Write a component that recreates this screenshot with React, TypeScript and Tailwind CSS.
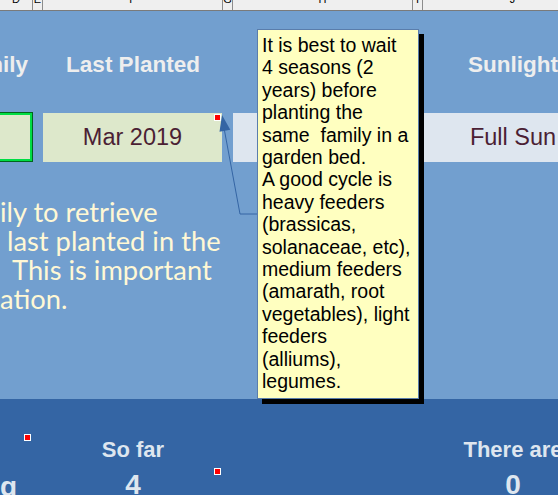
const cols = "grid grid-cols-[33px_10px_180px_10px_180px_10px_180px]";

function ColumnHeaders() {
  const letters = ["D", "E", "F", "G", "H", "I", "J"];
  return (
    <div className={`${cols} h-[11px] shrink-0 bg-[#efefef] border-b border-[#7a7a7a]`}>
      {letters.map((l) => (
        <div key={l} className="flex justify-center overflow-hidden border-r border-[#8c8c8c]">
          <span className="-mt-[6px] text-[11px] leading-none text-black">{l}</span>
        </div>
      ))}
    </div>
  );
}

function Marker({ className }: { className: string }) {
  return <div className={`absolute h-[7px] w-[7px] border border-white bg-[#ff0000] ${className}`} />;
}

export default function App() {
  return (
    <div className="relative h-[495px] w-[558px] overflow-hidden bg-[#729fcf] font-['Liberation_Sans',Arial,sans-serif]">
      <div className="flex h-full flex-col">
        <ColumnHeaders />

        {/* main block */}
        <div className="h-[388px] shrink-0 pt-[43px]">
          <div className={`${cols} h-[22px] text-[22.5px] font-bold leading-none text-[#eeeeee] whitespace-nowrap`}>
            <div className="flex justify-end overflow-hidden pr-[5px]">Family</div>
            <div />
            <div className="text-center">Last Planted</div>
            <div />
            <div />
            <div />
            <div className="text-center">Sunlight</div>
          </div>

          <div className={`${cols} mt-[36px] h-[50px] text-[23.5px] text-[#4b1f34]`}>
            <div className="-ml-[6px] h-[50px] border border-[#00661c]">
              <div className="h-full border-2 border-[#00dd44] bg-[#dde8cb]" />
            </div>
            <div />
            <div className="mt-[1px] mr-[1px] flex h-[49px] items-center justify-center bg-[#dde8cb]">Mar 2019</div>
            <div />
            <div className="mt-[1px] h-[49px] bg-[#dee6ef]" />
            <div className="mt-[1px] h-[49px] bg-[#dee6ef]" />
            <div className="mt-[1px] flex h-[49px] items-center justify-center bg-[#dee6ef]">Full Sun</div>
          </div>

          <div className="mt-[35px] font-['Lato',sans-serif] text-[27.3px] leading-[29px] text-[#fff8d5] whitespace-nowrap">
            <div>ily to retrieve</div>
            <div className="pl-[7px]">last planted in the</div>
            <div className="pl-[12px]">This is important</div>
            <div>ation.</div>
          </div>
        </div>

        {/* totals block */}
        <div className="flex-1 overflow-hidden bg-[#3465a4] pt-[40px] font-bold text-[#dee6ef] whitespace-nowrap">
          <div className={`${cols} h-[22px] text-[22px] leading-none`}>
            <div />
            <div />
            <div className="text-center">So far</div>
            <div />
            <div />
            <div />
            <div className="text-center">There are</div>
          </div>
          <div className={`${cols} mt-[10px] text-[28px] leading-none`}>
            <div className="pt-[2px]">g</div>
            <div />
            <div className="text-center">4</div>
            <div />
            <div />
            <div />
            <div className="text-center">0</div>
          </div>
        </div>
      </div>

      <Marker className="left-[214px] top-[114px]" />
      <Marker className="left-[24px] top-[434px]" />
      <Marker className="left-[214px] top-[468px]" />

      {/* comment callout line */}
      <svg className="pointer-events-none absolute left-0 top-0" width="558" height="495">
        <polyline points="224,128 240,214 257,214" fill="none" stroke="#3465a4" strokeWidth="1" />
        <polygon points="222,115 230.3,129.7 219.5,131.7" fill="#3465a4" />
      </svg>

      <div className="absolute left-[257px] top-[29px] h-[370px] w-[162px] border border-[#5a7dab] bg-[#ffffc0] pl-[4px] pt-[4px] text-[19.5px] leading-[22.4px] text-black whitespace-pre shadow-[5px_5px_0_#000]">
        {"It is best to wait\n4 seasons (2\nyears) before\nplanting the\nsame  family in a\ngarden bed.\nA good cycle is\nheavy feeders\n(brassicas,\nsolanaceae, etc),\nmedium feeders\n(amarath, root\nvegetables), light\nfeeders\n(alliums),\nlegumes."}
      </div>
    </div>
  );
}
